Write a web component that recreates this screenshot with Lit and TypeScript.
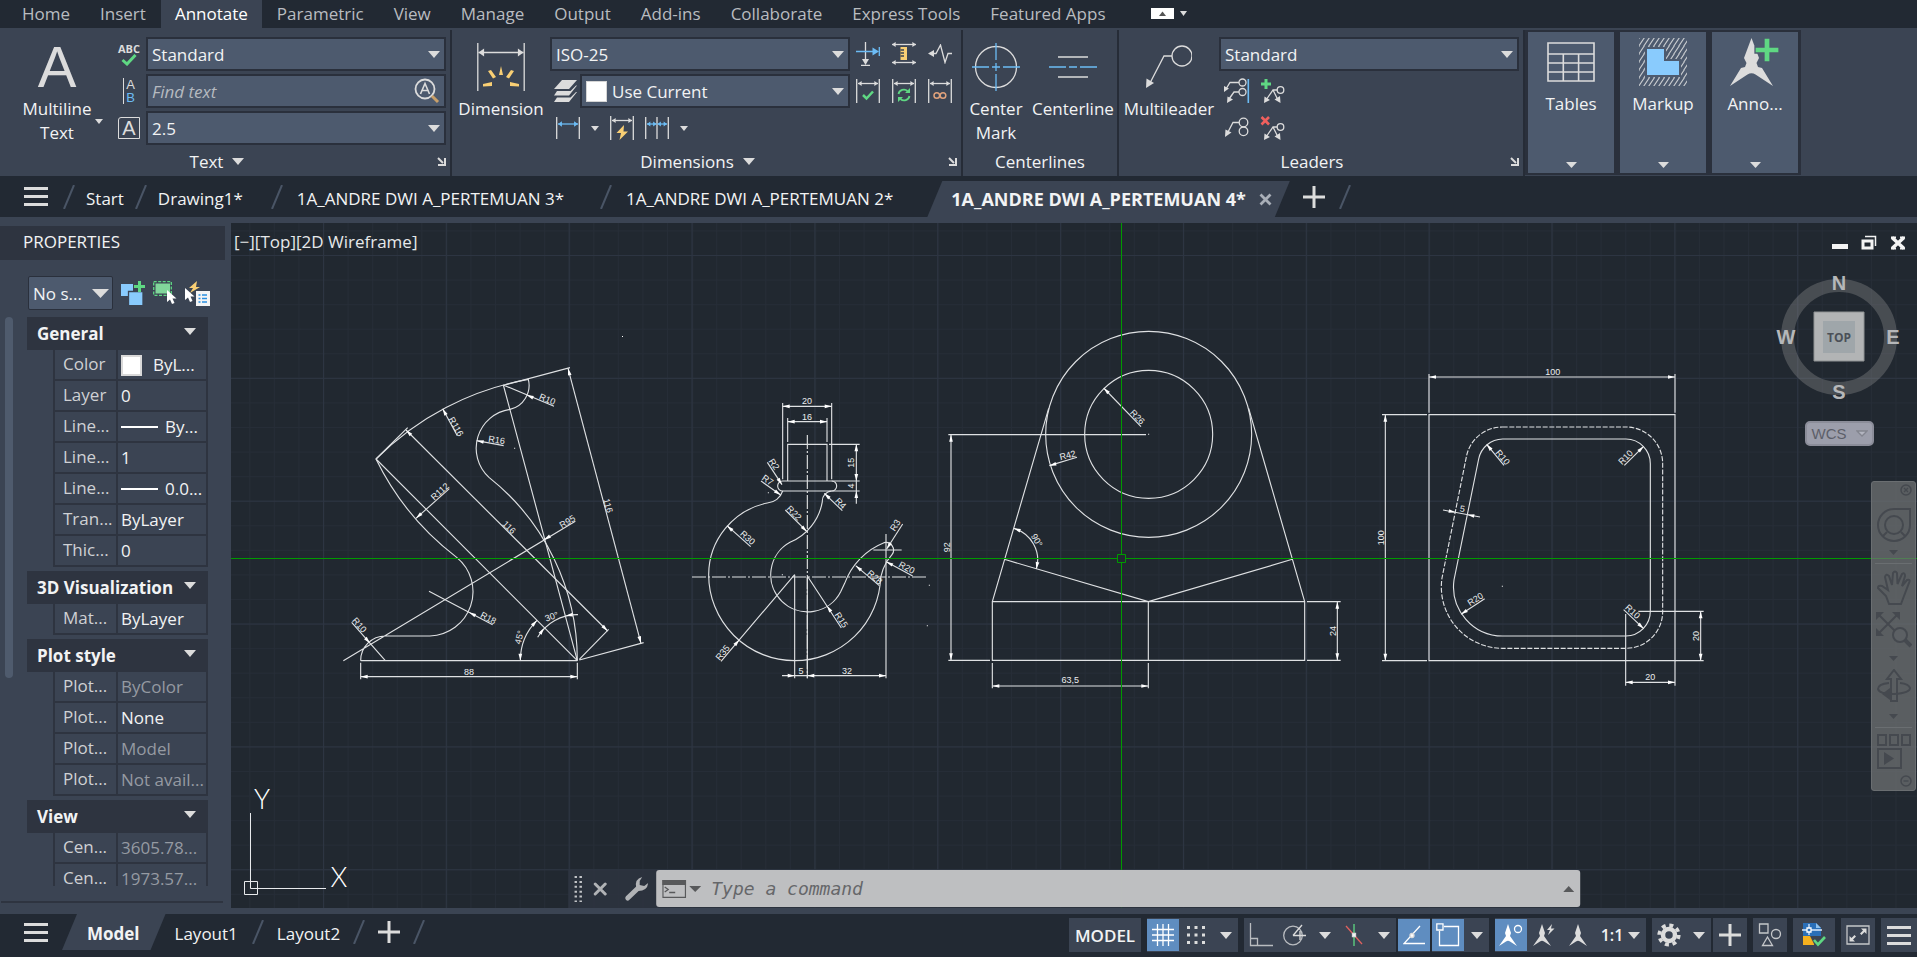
import { LitElement, html, svg, css, nothing } from "lit";
import { customElement } from "lit/decorators.js";

const base = css`
  :host { display: block; box-sizing: border-box; font-family: "Open Sans", "Noto Sans", sans-serif; font-size: 17px; color: #f2f3f4; }
  *, *::before, *::after { box-sizing: border-box; }
  button, select, input { font: inherit; color: inherit; background: none; border: 0; margin: 0; padding: 0; border-radius: 0; outline: none; }
  button { display: flex; align-items: center; justify-content: center; cursor: default; white-space: nowrap; }
  svg { display: block; flex: none; }
  a { color: inherit; text-decoration: none; }
  .combo { display: grid; grid-template-columns: minmax(0, 1fr); height: 34px; border: 2px solid #2a303c; background: #4d5a6e; }
  .combo > * { grid-area: 1 / 1; }
  .combo select, .combo input { appearance: none; width: 100%; height: 100%; padding: 0 28px 0 4px; }
  .combo > svg { justify-self: end; align-self: center; margin-right: 4px; pointer-events: none; }
`;

const LIGHT = "#dcdcdc";
const BLUE = "#6cbcf5";
const GREEN = "#5fd883";
const AMBER = "#f9cf74";

const ic = (w: number, h: number, body: unknown) =>
  html`<svg width=${w} height=${h} viewBox="0 0 ${w} ${h}" fill="none" stroke=${LIGHT} stroke-width="1.3" aria-hidden="true">${body}</svg>`;
const caret = (w = 12, h = 7, color = LIGHT) =>
  html`<svg width=${w} height=${h} viewBox="0 0 12 7" preserveAspectRatio="none" aria-hidden="true"><path d="M0 0H12L6 7Z" fill=${color} /></svg>`;
const menuIcon = () => ic(24, 19, svg`<path stroke="none" fill=${LIGHT} d="M0 0H24V3H0ZM0 8H24V11H0ZM0 16H24V19H0Z"/>`);
const plusIcon = () => ic(22, 22, svg`<path stroke="none" fill=${LIGHT} d="M9.500 0H12.500V9.500H22V12.500H12.500V22H9.500V12.500H0V9.500H9.500Z"/>`);
const slash = () => ic(12, 24, svg`<path d="M11 0L1 24" stroke="#4a5566" stroke-width="2"/>`);

const hArrow = (x1: number, x2: number, y: number, c: string, s = 4) =>
  svg`<path d="M${x1} ${y}H${x2}" stroke=${c}/><path stroke="none" fill=${c} d="M${x1} ${y}l${s * 1.4} ${-s}v${2 * s}ZM${x2} ${y}l${-s * 1.4} ${-s}v${2 * s}Z"/>`;
const dimFrame = (body: unknown) => ic(24, 24, svg`<path d="M.7 0V24M23.300 0V24"/>${hArrow(2, 22, 4.5, LIGHT, 2.6)}${body}`);

/* ---------- icons of the ribbon ---------- */
const icons = {
  abc: () => html`<span class="abc">ABC${ic(16, 12, svg`<path d="M1.500 6L6 10L14.500 1" stroke=${GREEN} stroke-width="3"/>`)}</span>`,
  align: () => html`<span class="ab"><span>A</span><span class="b">B</span></span>`,
  boxA: () => html`<span class="boxa">A</span>`,
  find: () => ic(26, 26, svg`<circle cx="11" cy="11" r="9.500" stroke-width="1.800"/><path d="M18 18L24 24" stroke="#c9a06a" stroke-width="3"/><path d="M6.500 16L11 5.500L15.500 16M8 12.500H14" stroke-width="1.600"/>`),
  dimension: () => ic(48, 48, svg`<path d="M.8 0V48M47.200 0V48"/>${hArrow(1.5, 46.5, 9.5, LIGHT, 4)}
    <path stroke="none" fill=${AMBER} d="M24 23l2 9h-4ZM11 28l3-1 5 7-3 1.500ZM37 28l-3-1-5 7 3 1.500ZM6 41l9-2v4l-9 .5ZM42 41l-9-2v4l9 .5Z"/>`),
  layers: () => ic(23, 22, svg`<path stroke="none" fill=${LIGHT} d="M8 0H23L15 9H0ZM3 11L16.500 11L22 5.500H23L15 15.500H0ZM3 17.500H16.500L22 12H23L15 22H0Z"/>`),
  linear: () => ic(24, 22, svg`<path d="M.7 0V22M23.300 0V22"/>${hArrow(2, 22, 7, BLUE, 2.8)}`),
  quick: () => dimFrame(svg`<path stroke="none" fill=${AMBER} d="M14 9L6.500 17H11L9.500 24L18 15.500H13.500Z"/>`),
  chain: () => ic(24, 22, svg`<path d="M.7 0V22M12 0V22M23.300 0V22"/>${hArrow(2, 11.5, 7, BLUE, 2.4)}${hArrow(12.5, 22, 7, BLUE, 2.4)}`),
  breakDim: () => ic(24, 24, svg`<path d="M9.500 0V18M5 23.500H14"/><path stroke="none" fill=${LIGHT} d="M9.500 23L6 17H13Z"/><path d="M0 9.500H18M23.300 5V14" stroke=${BLUE}/><path stroke="none" fill=${BLUE} d="M23 9.500L16.500 5.500V13.500Z"/>`),
  adjust: () => ic(24, 24, svg`${hArrow(0, 24, 2.5, LIGHT, 2.6)}${hArrow(0, 24, 20.5, LIGHT, 2.6)}<path stroke="none" fill=${AMBER} d="M8.500 5H15V18H8.500Z"/><path d="M8.500 8H12M8.500 11H12M8.500 14H12" stroke="#3b4453"/>`),
  jog: () => ic(24, 20, svg`<path d="M4 9.500H8L12.500 1L17 18.500L20 9.500H24"/><path stroke="none" fill=${LIGHT} d="M0 9.500L6 6V13Z"/>`),
  inspect: () => dimFrame(svg`<path d="M7 16L10.500 19.500L17 12.500" stroke=${GREEN} stroke-width="2.500"/>`),
  update: () => dimFrame(svg`<path d="M6.500 15a5.500 5.500 0 0 1 9-3M17.500 17a5.500 5.500 0 0 1-9 3" stroke=${GREEN} stroke-width="1.800"/><path stroke="none" fill=${GREEN} d="M18 9V14H13ZM6 23V18H11Z"/>`),
  assoc: () => dimFrame(svg`<circle cx="8.800" cy="16.500" r="2.800" stroke="#e0a27c" stroke-width="1.500"/><circle cx="15" cy="16.500" r="2.800" stroke="#e0a27c" stroke-width="1.500"/>`),
  centerMark: () => ic(48, 48, svg`<circle cx="24" cy="24" r="20.500"/><path d="M24 0V17M24 20V28M24 31V48M0 24H17M20 24H28M31 24H48" stroke=${BLUE}/>`),
  centerLine: () => ic(48, 24, svg`<path d="M9 2H39M9 22H39"/><path d="M0 12H17M20 12H28M31 12H48" stroke=${BLUE}/>`),
  multileader: () => ic(46, 44, svg`<circle cx="36" cy="11" r="10"/><path d="M26 11H18L4 38"/><path stroke="none" fill=${LIGHT} d="M0 43L.5 33.500L8 38Z"/>`),
  leaderAlign: () => ic(26, 26, svg`<circle cx="18.500" cy="4.500" r="3.500"/><circle cx="18.500" cy="14" r="3.500"/><path d="M15 4.500H6L2 11M15 14H10L5 21"/><path stroke="none" fill=${LIGHT} d="M0 14V8L5 10.500ZM3 25L3.500 18.500L9 21.500Z"/><path d="M24.300 1V25" stroke=${BLUE} stroke-width="1.600"/>`),
  leaderAdd: () => ic(26, 26, svg`<path stroke="none" fill=${GREEN} d="M4.500 1H7.500V4.500H11V7.500H7.500V11H4.500V7.500H1V4.500H4.500Z"/><circle cx="20.500" cy="12" r="3.300"/><path d="M17 12H13L6 22M13 12L18 22"/><path stroke="none" fill=${LIGHT} d="M4 25L4.500 18.500L10 22ZM20.500 25L20 18L14.500 21.500Z"/>`),
  leaderCollect: () => ic(26, 24, svg`<circle cx="19.500" cy="6.500" r="4.300"/><circle cx="19.500" cy="15.300" r="4.300"/><path d="M15 6.500H9L4 16"/><path stroke="none" fill=${LIGHT} d="M1 21L1.500 13.500L7.500 16.500Z"/>`),
  leaderRemove: () => ic(26, 26, svg`<path d="M1.500 2L9 9.500M9 2L1.500 9.500" stroke="#f0605e" stroke-width="2.600"/><circle cx="20.500" cy="12" r="3.300"/><path d="M17 12H13L6 22M13 12L18 22"/><path stroke="none" fill=${LIGHT} d="M4 25L4.500 18.500L10 22ZM20.500 25L20 18L14.500 21.500Z"/>`),
  tables: () => ic(48, 48, svg`<path d="M1 5H47V43H1ZM1 16H47M1 25H47M1 34H47M16.300 16V43M31.600 16V43" stroke-width="1.600"/>`),
  markup: () => ic(48, 48, svg`<defs><pattern id="h" width="5" height="8" patternUnits="userSpaceOnUse"><path d="M-.5 8.500L5.500 -.5M-5.500 8.500L.5 -.5M4.500 8.500L10.500 -.5" stroke="#c9ccd0" stroke-width="1.100"/></pattern></defs><path d="M0 0H48V48H0Z" fill="url(#h)" stroke="none"/><path d="M7 10H26V22H41V38H7Z" fill="#89cbfd" stroke="#4d5a6e" stroke-width="2"/>`),
  anno: () => ic(50, 48, svg`<path stroke="none" fill=${LIGHT} d="M21.500 0L29 20L26.500 25L28 29L32 30L43 48L25.500 36.500Q21.500 34 17.500 36.500L0 48L11 30L15 29L16.500 25L14 20Z"/><path stroke="#4d5a6e" fill=${GREEN} d="M34 0H40V9H49V15H40V24H34V15H25V9H34Z"/>`),
  launcher: () => ic(9, 9, svg`<path d="M1 1L6 6" stroke-width="2"/><path d="M8 1V8H1" stroke-width="2"/>`),
};

@customElement("ribbon-bar")
class RibbonBar extends LitElement {
  static styles = [base, css`
    .tabs { display: flex; height: 28px; padding-left: 7px; background: #222933; color: #b9bcc0; align-items: stretch; }
    .tab { padding: 0 15px; line-height: 24px; }
    .tab.on { background: #3b4453; color: #fff; padding: 0 14px; }
    .mini { margin: 4px 0 0 30px; gap: 6px; height: 18px; }
    .ribbon { display: flex; height: 148px; padding-left: 2px; background: #3b4453; }
    .panel { display: flex; flex-direction: column; border-right: 2px solid #262c37; margin-top: 2px; padding-top: 7px; }
    .body { display: flex; flex: 1; }
    .title { display: flex; height: 30px; align-items: center; }
    .title .name { flex: 1; gap: 9px; height: 26px; }
    .launch { width: 18px; height: 18px; }
    .big { flex-direction: column; justify-content: flex-start; align-self: flex-start; line-height: 24px; }
    .big .pic { display: flex; align-items: center; justify-content: center; height: 60px; }
    .big .lab { display: grid; grid-template-columns: 1fr auto 1fr; align-items: center; width: 100%; white-space: pre-line; }
    .big .lab b { font-weight: 400; grid-column: 2; }
    .big .lab svg { margin-left: 4px; }
    .w110 { width: 110px; } .w98 { width: 98px; } .w66 { width: 66px; } .w88 { width: 88px; } .w100 { width: 100px; }
    .pic .a { font: 58px/60px "Liberation Sans", sans-serif; color: #dcdcdc; }
    .side { display: grid; grid-template-rows: repeat(3, 34px); gap: 3px; width: 34px; }
    .stack { display: grid; grid-template-rows: repeat(3, 34px); gap: 3px; width: 300px; }
    .find input { font-style: italic; }
    .find input::placeholder { color: #b6bac0; opacity: 1; }
    .use { display: grid; grid-template-columns: 30px 1fr; }
    .use select { padding-left: 30px; }
    .swatch { width: 21px; height: 21px; background: #fff; border: 1px solid #d5d5d5; margin-left: 4px; align-self: center; pointer-events: none; }
    .row { display: flex; align-items: center; gap: 11px; padding-left: 6px; }
    .dims { display: grid; grid-template: 34px 34px / repeat(3, 36px); gap: 3px 0; }
    .end3 { padding-right: 3px; } .end4 { padding-right: 4px; }
    .pairs { display: grid; grid-template: 34px 34px / 24px 24px; gap: 3px 12px; padding-left: 6px; justify-content: start; }
    .abc { font-size: 11px; font-weight: 700; line-height: 11px; color: #dcdcdc; display: flex; flex-direction: column; align-items: center; }
    .ab { display: flex; flex-direction: column; border-left: 1px solid #dcdcdc; padding-left: 2px; font: 13px/13px "Liberation Sans", sans-serif; color: #dcdcdc; }
    .ab .b { color: #6cbcf5; }
    .boxa { width: 22px; height: 22px; border: 1px solid #dcdcdc; border-top-left-radius: 3px; font: 20px/20px "Liberation Sans", sans-serif; color: #dcdcdc; }
    .fold { flex-direction: column; width: 92px; margin: 2px 0 1px; border: solid #2a303c; border-width: 2px 3px; background: #4d5a6e; justify-content: flex-start; padding: 6px 0 5px; }
    .fold .txt { line-height: 24px; margin-top: 6px; flex: 1; }
  `];
  render() {
    const tabs = ["Home", "Insert", "Annotate", "Parametric", "View", "Manage", "Output", "Add-ins", "Collaborate", "Express Tools", "Featured Apps"];
    const combo = (name: string, value: string, extra: unknown = nothing) => html`
      <div class="combo"><select aria-label=${name}><option>${value}</option></select>${extra}${caret()}</div>`;
    const btn = (name: string, body: unknown) => html`<button aria-label=${name}>${body}</button>`;
    const title = (name: string, more: boolean, launch: boolean) => html`
      <div class="title"><button class="name">${name}${more ? caret() : nothing}</button>
      ${launch ? html`<button class="launch" aria-label="${name} settings">${icons.launcher()}</button>` : nothing}</div>`;
    const fold = (name: string, body: unknown) => html`<button class="fold">${body}<span class="txt">${name}</span>${caret(11, 6)}</button>`;
    return html`
      <nav class="tabs">
        ${tabs.map((t) => html`<button class="tab ${t === "Annotate" ? "on" : ""}">${t}</button>`)}
        <button class="mini" aria-label="Minimize ribbon">
          ${ic(23, 11, svg`<path stroke="none" fill="#fff" d="M0 0H23V11H0Z"/><path stroke="none" fill="#555" d="M8 8L11.500 3.500L15 8Z"/>`)}${caret(7, 5)}
        </button>
      </nav>
      <div class="ribbon">
        <section class="panel">
          <div class="body end4">
            <button class="big w110"><span class="pic"><span class="a">A</span></span><span class="lab"><b>Multiline
Text</b>${caret(8, 5)}</span></button>
            <div class="side">${btn("Check spelling", icons.abc())}${btn("Align text", icons.align())}${btn("Text height", icons.boxA())}</div>
            <div class="stack">
              ${combo("Text style", "Standard")}
              <div class="combo find"><input aria-label="Find text" placeholder="Find text" />${icons.find()}</div>
              ${combo("Text height", "2.5")}
            </div>
          </div>
          ${title("Text", true, true)}
        </section>
        <section class="panel">
          <div class="body end3">
            <button class="big w98"><span class="pic">${icons.dimension()}</span><span class="lab"><b>Dimension</b></span></button>
            <div class="stack">
              ${combo("Dimension style", "ISO-25")}
              <div class="use">${btn("Dimension layer", icons.layers())}${combo("Layer", "Use Current", html`<span class="swatch"></span>`)}</div>
              <div class="row">
                ${btn("Linear", icons.linear())}${btn("More linear", caret(8, 5))}${btn("Quick dimension", icons.quick())}${btn("Continue", icons.chain())}${btn("More continue", caret(8, 5))}
              </div>
            </div>
            <div class="dims">
              ${btn("Break", icons.breakDim())}${btn("Adjust space", icons.adjust())}${btn("Jog line", icons.jog())}
              ${btn("Inspect", icons.inspect())}${btn("Update", icons.update())}${btn("Reassociate", icons.assoc())}
            </div>
          </div>
          ${title("Dimensions", true, true)}
        </section>
        <section class="panel">
          <div class="body">
            <button class="big w66"><span class="pic">${icons.centerMark()}</span><span class="lab"><b>Center
Mark</b></span></button>
            <button class="big w88"><span class="pic">${icons.centerLine()}</span><span class="lab"><b>Centerline</b></span></button>
          </div>
          ${title("Centerlines", false, false)}
        </section>
        <section class="panel">
          <div class="body end4">
            <button class="big w100"><span class="pic">${icons.multileader()}</span><span class="lab"><b>Multileader</b></span></button>
            <div class="stack">
              ${combo("Leader style", "Standard")}
              <div class="pairs">
                ${btn("Align leaders", icons.leaderAlign())}${btn("Add leader", icons.leaderAdd())}
                ${btn("Collect leaders", icons.leaderCollect())}${btn("Remove leader", icons.leaderRemove())}
              </div>
            </div>
          </div>
          ${title("Leaders", false, true)}
        </section>
        ${fold("Tables", icons.tables())}${fold("Markup", icons.markup())}${fold("Anno...", icons.anno())}
      </div>`;
  }
}

@customElement("file-tabs")
class FileTabs extends LitElement {
  static styles = [base, css`
    :host { background: #222933; }
    nav { display: flex; align-items: center; height: 41px; padding-left: 24px; }
    .menu { margin-right: 15px; }
    .tab { padding: 4px 36px 0 14px; height: 40px; }
    .tab.short { padding: 4px 11px 0; }
    .tab.mid { padding: 4px 28px 0 11px; }
    .active { display: flex; align-items: center; gap: 13px; align-self: flex-end; height: 36px; padding: 0 18px 0 24px; margin-right: 13px; margin-left: -2px; background: #3b4453; font-size: 18px; font-weight: 700; clip-path: polygon(15px 0, 100% 0, calc(100% - 15px) 100%, 0 100%); }
    .add { margin-right: 14px; }
  `];
  render() {
    return html`<nav>
      <button class="menu" aria-label="File menu">${menuIcon()}</button>
      ${slash()}<button class="tab short">Start</button>
      ${slash()}<button class="tab mid">Drawing1*</button>
      ${slash()}<button class="tab">1A_ANDRE DWI A_PERTEMUAN 3*</button>
      ${slash()}<button class="tab">1A_ANDRE DWI A_PERTEMUAN 2*</button>
      <div class="active"><span>1A_ANDRE DWI A_PERTEMUAN 4*</span>
        <button aria-label="Close drawing">${ic(13, 13, svg`<path d="M1.500 1.500L11.500 11.500M11.500 1.500L1.500 11.500" stroke="#a9afb8" stroke-width="2.800"/>`)}</button></div>
      <button class="add" aria-label="New drawing">${plusIcon()}</button>${slash()}
    </nav>`;
  }
}

type Row = { k: string; v: string; dim?: boolean; mark?: "swatch" | "line" };
const groups: { name: string; rows: Row[] }[] = [
  { name: "General", rows: [
    { k: "Color", v: "ByL...", mark: "swatch" }, { k: "Layer", v: "0" }, { k: "Line...", v: "By...", mark: "line" },
    { k: "Line...", v: "1" }, { k: "Line...", v: "0.0...", mark: "line" }, { k: "Tran...", v: "ByLayer" }, { k: "Thic...", v: "0" } ] },
  { name: "3D Visualization", rows: [{ k: "Mat...", v: "ByLayer" }] },
  { name: "Plot style", rows: [
    { k: "Plot...", v: "ByColor", dim: true }, { k: "Plot...", v: "None" }, { k: "Plot...", v: "Model", dim: true }, { k: "Plot...", v: "Not avail...", dim: true } ] },
  { name: "View", rows: [{ k: "Cen...", v: "3605.78...", dim: true }, { k: "Cen...", v: "1973.57...", dim: true }] },
];

@customElement("properties-panel")
class PropertiesPanel extends LitElement {
  static styles = [base, css`
    :host { display: flex; flex-direction: column; width: 231px; background: #3b4453; padding-top: 3px; min-height: 0; }
    h2 { margin: 0 6px 0 0; padding-left: 23px; height: 34px; line-height: 31px; font-size: 17px; font-weight: 400; background: #2e3440; }
    .pick { display: flex; align-items: center; margin: 16px 0 7px 28px; gap: 8px; }
    .combo { width: 85px; border-width: 1px; border-radius: 2px; }
    .combo select { padding: 0 30px 0 4px; }
    .combo > svg { margin-right: 3px; }
    .list { display: flex; flex: 1; min-height: 0; margin-bottom: 15px; padding-left: 5px; gap: 14px; }
    .bar { width: 8px; height: 361px; border-radius: 4px; background: #4f5b6d; }
    .groups { width: 181px; overflow: hidden; }
    .head { width: 100%; height: 33px; padding: 0 12px 0 10px; justify-content: space-between; font-weight: 700; background: #2e3440; }
    .head svg { margin-bottom: 4px; }
    table { width: 155px; margin: 0 0 4px 26px; border-collapse: separate; border-spacing: 0; table-layout: fixed; background: #2e3440; }
    tr { height: 31px; }
    th, td { padding: 0; font-weight: 400; text-align: left; line-height: 28px; height: 31px; border: solid #2e3440; border-width: 0 2px 2px; background: #3b4453; white-space: nowrap; overflow: hidden; vertical-align: top; }
    th { width: 64px; color: #cfd1d4; padding-left: 8px; border-right-width: 1px; }
    td { padding: 1px 0 0 3px; border-left-width: 1px; }
    td .cell { display: flex; align-items: center; gap: 7px; }
    .dim { color: #959aa2; }
    .sw { width: 21px; height: 21px; background: #fff; border: 2px solid #d9d9d9; margin-right: 4px; }
    .ln { width: 37px; height: 2px; background: #fff; }
    .foot { height: 2px; margin: 0 8px 5px 1px; background: #2e3440; }
  `];
  render() {
    const cursor = (x: number, y: number) => svg`<path stroke="none" fill="#fff" d="M${x} ${y}v12l3-2.500l2 4.500l2.500-1l-2-4.500h4Z"/>`;
    return html`
      <h2>PROPERTIES</h2>
      <div class="pick">
        <div class="combo"><select aria-label="Selection"><option>No s...</option></select>${caret(17, 9)}</div>
        <button aria-label="Toggle pick add">${ic(24, 24, svg`<path stroke="none" fill="#89cbfd" d="M0 3H12V15H0Z"/><path stroke="#3b4453" fill="#89cbfd" d="M7.500 10.500H22V25H7.500Z"/><path stroke="none" fill=${GREEN} d="M17 0H20V4H24V7H20V11H17V7H13V4H17Z"/>`)}</button>
        <button aria-label="Select objects">${ic(24, 24, svg`<path stroke=${GREEN} stroke-dasharray="3 1.500" d="M.7 .7H18.300V14.300H.7Z"/><path stroke="none" fill="#81d69b" d="M2.500 2.500H17V12.500H2.500Z"/>${cursor(14, 9)}`)}</button>
        <button aria-label="Quick select">${ic(25, 25, svg`<path stroke="none" fill=${AMBER} d="M12 0L4 7H8L5 12L15 6H11Z"/>${cursor(0, 7)}<path stroke="none" fill="#f4f4f4" d="M11 10H25V25H11Z"/><path d="M13.500 14H15.500M17 14H22M13.500 17.500H15.500M17 17.500H22M13.500 21H15.500M17 21H22" stroke="#2a8fe0"/>`)}</button>
      </div>
      <div class="list">
        <div class="bar"></div>
        <div class="groups">
          ${groups.map((g) => html`
            <button class="head">${g.name}${caret(12, 7)}</button>
            <table aria-label=${g.name}><tbody>${g.rows.map((r) => html`
              <tr><th scope="row">${r.k}</th>
              <td class=${r.dim ? "dim" : ""}><div class="cell">${r.mark === "swatch" ? html`<span class="sw"></span>` : r.mark ? html`<span class="ln"></span>` : nothing}${r.v}</div></td></tr>`)}
            </tbody></table>`)}
        </div>
      </div>
      <div class="foot"></div>`;
  }
}

/* ---------- drafting helpers: three drawing units make one screen pixel ---------- */
const head = (x: number, y: number, deg: number) => svg`<path class="tip" transform="translate(${x} ${y}) rotate(${deg})" d="M0 0L-21 -5.500V5.500Z"/>`;
const angle = (x1: number, y1: number, x2: number, y2: number) => (Math.atan2(y2 - y1, x2 - x1) * 180) / Math.PI;
const label = (x: number, y: number, t: string, rot = 0) => svg`<text x="0" y="9" transform="translate(${x} ${y}) rotate(${rot})">${t}</text>`;
const dim = (x1: number, y1: number, x2: number, y2: number) =>
  svg`<path d="M${x1} ${y1}L${x2} ${y2}"/>${head(x1, y1, angle(x2, y2, x1, y1))}${head(x2, y2, angle(x1, y1, x2, y2))}`;
const leader = (x1: number, y1: number, x2: number, y2: number) => svg`<path d="M${x1} ${y1}L${x2} ${y2}"/>${head(x1, y1, angle(x2, y2, x1, y1))}`;
const dot = (x: number, y: number) => svg`<path class="tip" d="M${x - 1.5} ${y - 1.5}h3v3h-3Z"/>`;

const boot = svg`
  <path d="M62 962H712M10 962L706 544M62 962A74 74 0 0 1 136 888H270A133 133 0 0 0 350 652A827 827 0 0 1 108 357A857 857 0 0 1 565 118A74 74 0 0 1 510 208A118 118 0 0 0 447 412A702 702 0 0 1 712 962"/>
  <path d="M108 357L712 962M490 135L712 962M498 134L690 83M108 357L203 263M718 958L806 868M718 960L911 908M62 968V1018M712 968V1018"/>
  <path d="M541 962A171 171 0 0 1 591 841M593 892A138 138 0 0 1 714 824"/>
  ${dim(62, 1010, 712, 1010)}${dim(198, 270, 803, 873)}${dim(684, 85, 903, 910)}
  ${leader(308, 206, 352, 287)}${leader(228, 535, 328, 446)}${leader(410, 302, 491, 317)}
  <path d="M35 847L136 962M490 135L642 199M267 754L458 854"/>
  ${head(90, 910, 49)}${head(560, 165, 203)}${head(387, 817, 207)}${head(612, 599, 149)}
  ${head(541, 962, 90)}${head(591, 841, -48)}${head(612, 864, -56)}${head(677, 827, 172)}
  ${label(387, 996, "88")}${label(507, 562, "116", 45)}${label(804, 497, "116", 75)}${label(622, 178, "R10", 22)}
  ${label(470, 300, "R16", 8)}${label(348, 260, "R116", 61)}${label(300, 455, "R112", -42)}${label(682, 545, "R95", -31)}
  ${label(445, 834, "R18", 27)}${label(58, 855, "R10", 49)}${label(538, 892, "45°", -75)}${label(635, 830, "30°", -20)}${dot(524, 325)}`;

const hook = svg`
  <path stroke-dasharray="42 6 6 6" d="M382 165V895M36 591H741"/>
  <path d="M323 303V193H441V303M308 303H455A15 15 0 0 1 455 333H308A15 15 0 0 1 308 303"/>
  <path d="M308 333A52 52 0 0 1 262 369A221 221 0 0 0 86 584A258 258 0 0 0 344 842A258 258 0 0 0 602 592A148 148 0 0 1 620 545L636 524A23 23 0 0 0 612 488A207 207 0 0 0 494 610L482 635A111 111 0 1 1 330 487A162 162 0 0 0 427 365A30 30 0 0 1 455 333"/>
  <path d="M308 69V298M455 69V298M323 114V186M441 114V186M447 193H539M455 303H539M455 333H539M529 303V371M344 584V895M618 462V895M580 510H665M306 887H382M382 591V895"/>
  ${dim(308, 79, 455, 79)}${dim(323, 125, 441, 125)}${dim(529, 193, 529, 303)}${head(529, 333, -90)}${dim(382, 887, 618, 887)}${head(344, 887, 0)}
  ${leader(141, 437, 212, 500)}${leader(381, 455, 316, 390)}${leader(302, 345, 243, 303)}${leader(306, 314, 262, 247)}${leader(433, 340, 487, 392)}
  ${leader(620, 507, 668, 432)}${leader(619, 545, 698, 588)}${leader(527, 557, 598, 617)}
  <path d="M344 584L123 844M382 588L484 744"/>${head(178, 779, -50)}${head(441, 677, 237)}
  ${label(381, 63, "20")}${label(381, 110, "16")}${label(514, 248, "15", -90)}${label(514, 318, "4", -90)}${label(282, 253, "R2", 57)}${label(263, 300, "R7", 35)}
  ${label(482, 370, "R4", 45)}${label(342, 399, "R22", 45)}${label(203, 473, "R30", 42)}${label(646, 436, "R3", -58)}${label(680, 563, "R20", 28)}
  ${label(584, 592, "R28", 40)}${label(484, 720, "R15", 57)}${label(128, 818, "R35", -50)}${label(363, 872, "5")}${label(501, 872, "32")}
  ${dot(748, 616)}${dot(742, 737)}${dot(265, 338)}${dot(307, 584)}`;

const bracket = svg`
  <circle cx="656" cy="343" r="309"/><circle cx="656" cy="343" r="192"/>
  <path d="M187 845L356 265M1124 845L956 265M187 845H1124V1021H187ZM655 845V1021M223 718L655 845L1087 718M55 344H648M55 1021H180M187 1029V1105M655 1029V1105M1131 845H1232M1131 1021H1232"/>
  <path d="M251 625A98 98 0 0 1 319 747"/>${head(251, 625, 200)}${head(319, 747, 100)}
  ${dim(63, 344, 63, 1021)}${dim(187, 1098, 655, 1098)}${dim(1222, 845, 1222, 1021)}
  ${leader(521, 204, 633, 320)}${leader(358, 437, 441, 412)}
  ${label(622, 291, "R26", 45)}${label(413, 406, "R42", -15)}${label(320, 661, "90°", 60)}${label(50, 682, "92", -90)}${label(421, 1080, "63,5")}${label(1208, 933, "24", -90)}${dot(656, 343)}`;

const plate = svg`
  <path d="M207 194H945V932H207ZM428 267H798A74 74 0 0 1 871 341V784A74 74 0 0 1 798 858H428A148 148 0 0 1 282 690L356 327A74 74 0 0 1 428 267"/>
  <path stroke-dasharray="15 5" d="M428 231H798A110 110 0 0 1 908 341V784A110 110 0 0 1 798 895H428A184 184 0 0 1 246 684L320 316A110 110 0 0 1 428 231"/>
  <path d="M207 72V188M945 72V188M66 194H201M66 932H201M835 784H1031M945 932H1031M797 792V1007M945 932V1007M249 480L360 501"/>
  ${dim(207, 81, 945, 81)}${dim(76, 194, 76, 932)}${dim(1022, 784, 1022, 932)}${dim(797, 997, 945, 997)}${head(287, 487, 11)}${head(322, 494, 191)}
  ${leader(380, 283, 432, 346)}${leader(851, 289, 793, 346)}${leader(303, 793, 374, 746)}${leader(851, 836, 791, 779)}
  ${label(578, 66, "100")}${label(63, 563, "100", -90)}${label(428, 322, "R10", 50)}${label(797, 322, "R10", -45)}${label(346, 748, "R20", -33)}
  ${label(818, 785, "R10", 43)}${label(307, 477, "5", 8)}${label(1009, 858, "20", -90)}${label(871, 981, "20")}${dot(427, 709)}`;

@customElement("drawing-view")
class DrawingView extends LitElement {
  static styles = [base, css`
    :host { display: block; position: relative; flex: 1; min-width: 0; overflow: hidden; background: #212830; }
    .sheet { position: absolute; inset: 0; width: 100%; height: 100%; }
    .ink { fill: none; stroke: #dfe1e3; stroke-width: 3.4; }
    .tip { fill: #fff; stroke: none; }
    .ink text { fill: #eceeef; stroke: none; font: 27px "Liberation Sans Narrow", "Liberation Sans", sans-serif; text-anchor: middle; }
    .axis { font: 300 27px Lato, sans-serif; fill: #fff; text-anchor: middle; }
    .view { position: absolute; left: 3px; top: 6px; display: flex; line-height: 26px; color: #e6e8ea; }
    .win { position: absolute; right: 11px; top: 12px; display: flex; gap: 13px; }
    .compass { position: absolute; right: 15px; top: 50px; width: 126px; height: 136px; }
    .compass text { font: 700 20px "Liberation Sans", sans-serif; fill: #b5b7b9; text-anchor: middle; }
    .compass .top { font: 700 12px "Open Sans", sans-serif; fill: #4b5058; }
    .wcs { position: absolute; right: 43px; top: 198px; width: 69px; height: 25px; gap: 9px; border: 2px solid #8b8d99; border-radius: 5px; background: #9c9eab; color: #5c5e69; font: 15px "Liberation Sans", sans-serif; }
    .nav { position: absolute; right: 1px; top: 258px; width: 45px; height: 310px; display: flex; flex-direction: column; align-items: center; background: rgba(112, 115, 116, .72); border: 1px solid #6a6e71; border-radius: 3px; padding-top: 2px; }
    .nav .edge { align-self: flex-end; margin-right: 3px; }
    .g12 { margin-top: 12px; } .g8 { margin-top: 8px; } .g6 { margin-top: 6px; } .last { margin-top: auto; margin-bottom: 3px; }
    .rule { width: 37px; height: 1px; background: #6a6e71; margin: 8px 0 0; }
    .rule.low { margin: 8px 0 6px; }
    .cmd { position: absolute; left: 50%; bottom: 0; width: 60%; transform: translateX(-50%); display: flex; align-items: center; height: 38px; background: rgba(46, 52, 65, .8); padding-bottom: 1px; }
    .grip { margin-left: 6px; } .x { margin-left: 10px; } .wrench { margin: 0 8px 0 18px; }
    .line { flex: 1; display: flex; align-items: center; height: 37px; border-radius: 3px; background: rgba(203, 203, 204, .92); padding: 0 6px; color: #5b5c5e; gap: 3px; }
    .line input { flex: 1; min-width: 0; height: 30px; margin-left: 7px; font: italic 18px "DejaVu Sans Mono", monospace; }
    .line input::placeholder { color: #66676a; opacity: 1; }
  `];
  render() {
    const T = "#45494f";
    const nav = (name: string, cls: string, w: number, h: number, body: unknown) =>
      html`<button class=${cls} aria-label=${name}><svg width=${w} height=${h} viewBox="0 0 ${w} ${h}" fill="none" stroke=${T} stroke-width="2">${body}</svg></button>`;
    return html`
      <svg class="sheet" role="img" aria-label="Model space">
        <defs>
          <pattern id="minor" width="24.570" height="24.570" patternUnits="userSpaceOnUse" x="92" y="32"><path d="M.5 0V25M0 .5H25" stroke="#262d37" fill="none"/></pattern>
          <pattern id="major" width="122.850" height="122.850" patternUnits="userSpaceOnUse" x="92" y="32"><path d="M.5 0V123M0 .5H123" stroke="#2d3542" stroke-width="1.200" fill="none"/></pattern>
        </defs>
        <rect width="100%" height="100%" fill="url(#minor)"/><rect width="100%" height="100%" fill="url(#major)"/>
        <g transform="translate(-231 -223)">
          <g class="ink" transform="translate(340 340) scale(.33333)">${boot}</g>
          <g class="ink" transform="translate(680 380) scale(.33333)">${hook}</g>
          <g class="ink" transform="translate(930 320) scale(.33333)">${bracket}</g>
          <g class="ink" transform="translate(1360 350) scale(.33333)">${plate}</g>
          <path d="M250.500 813V888.500H326M244.500 881.500H257.500V894.500H244.500Z" fill="none" stroke="#e8eaec"/>
          <text class="axis" x="262" y="809">Y</text><text class="axis" x="339" y="887">X</text>
          <path d="M622 336h1v1h-1Z" fill="#fff"/>
          <path d="M0 558.500H1117.500M1125.500 558.500H4000M1121.500 0V554.500M1121.500 562.500V3000M1117.500 554.500H1125.500V562.500H1117.500Z" fill="none" stroke="#009a00"/>
        </g>
      </svg>
      <div class="view"><button>[−]</button><button>[Top]</button><button>[2D Wireframe]</button></div>
      <div class="win">
        <button aria-label="Minimize">${ic(16, 16, svg`<path stroke="none" fill="#f4f4f4" d="M0 9H16V14H0Z"/>`)}</button>
        <button aria-label="Restore">${ic(16, 16, svg`<path d="M4 1.500H14.500V11" stroke="#f4f4f4" stroke-width="1.500"/><path d="M2 6H11V13H2Z" stroke="#f4f4f4" stroke-width="3"/>`)}</button>
        <button aria-label="Close">${ic(16, 16, svg`<path d="M2 2.500L14 13.500M14 2.500L2 13.500" stroke="#f4f4f4" stroke-width="3.500"/><path d="M1 2.500H6M10 2.500H15M1 13.500H6M10 13.500H15" stroke="#f4f4f4" stroke-width="2"/>`)}</button>
      </div>
      <svg class="compass" viewBox="0 0 126 136" role="img" aria-label="View cube">
        <circle cx="63" cy="64" r="51.500" fill="none" stroke="#9a9a9c" stroke-opacity=".32" stroke-width="13"/>
        <path d="M38 39H88V88H38Z" fill="#b2b4b5" stroke="#8f9293"/><path d="M47 48H79V80H47Z" fill="#9fa6aa"/>
        <text x="63" y="17">N</text><text x="63" y="126">S</text><text x="10" y="71">W</text><text x="117" y="71">E</text><text class="top" x="63" y="69">TOP</text>
      </svg>
      <button class="wcs">WCS${ic(12, 7, svg`<path d="M1 1H11L6 6Z" fill="#b3b5c0" stroke="#83858f"/>`)}</button>
      <div class="nav">
        ${nav("Close navigation bar", "edge", 12, 12, svg`<circle cx="6" cy="6" r="5" stroke-width="1.500"/><path d="M4 4L8 8M8 4L4 8" stroke-width="1.300"/>`)}
        ${nav("Steering wheel", "g12", 34, 34, svg`<path d="M17 1H33V17A16 16 0 1 1 17 1Z"/><circle cx="17" cy="17" r="9"/><path d="M10 24L6 28M24 24L28 28"/>`)}
        ${nav("More wheels", "g8", 9, 5, svg`<path d="M0 0H9L4.500 5Z" fill=${T} stroke="none"/>`)}
        <div class="rule"></div>
        ${nav("Pan", "g6", 34, 36, svg`<path d="M12 34L9 26L1 18Q1 15 5 16L11 20L8 7Q9 3 12 6L15 15L16 3Q18 0 20 3L20.500 14L25 4Q28 2 28 6L25 16L30 10Q34 9 32 13L27 26L24 34Z"/>`)}
        ${nav("Zoom", "g6", 36, 36, svg`<path d="M2 2L22 22M22 2L2 22"/><path d="M0 0H8L0 8ZM24 0H16L24 8ZM0 24H8L0 16Z" fill=${T} stroke="none"/><circle cx="24" cy="23" r="7" fill="#5c6064"/><path d="M29 28L35 34" stroke-width="4"/>`)}
        ${nav("More zoom", "g8", 9, 5, svg`<path d="M0 0H9L4.500 5Z" fill=${T} stroke="none"/>`)}
        ${nav("Orbit", "g8", 34, 33, svg`<path d="M14 32V10H10L17 1L24 10H20V32Z"/><path d="M12 14Q1 15 1 20Q2 25 17 25Q33 24 33 19Q32 15 23 14"/><path d="M5 25L13 19V31Z" fill=${T} stroke="none"/>`)}
        ${nav("More orbit", "g12", 9, 5, svg`<path d="M0 0H9L4.500 5Z" fill=${T} stroke="none"/>`)}
        <div class="rule low"></div>
        ${nav("Show motion", "", 34, 35, svg`<path d="M1 1H9V11H1ZM13 1H21V11H13ZM25 1H33V11H25ZM1 15H24V34H1Z"/><path d="M7 18L17 24.500L7 31Z" fill=${T} stroke="none"/>`)}
        ${nav("Customize", "edge last", 12, 12, svg`<circle cx="6" cy="6" r="5" stroke-width="1.500"/><path d="M3.500 6H8.500" stroke-width="1.300"/>`)}
      </div>
      <div class="cmd">
        <span class="grip">${ic(9, 27, svg`<path d="M1.500 1V27M6.500 1V27" stroke="#c3c5c8" stroke-width="2.500" stroke-dasharray="2 2.900"/>`)}</span>
        <button class="x" aria-label="Close command line">${ic(14, 14, svg`<path d="M2 2L12 12M12 2L2 12" stroke="#b0b2b5" stroke-width="3" stroke-linecap="round"/>`)}</button>
        <button class="wrench" aria-label="Customize">${ic(23, 24, svg`<path d="M2.500 21L13 11" stroke="#b0b2b5" stroke-width="5" stroke-linecap="round"/><path stroke="none" fill="#b0b2b5" d="M17 0Q9 2 11 11L13 14Q22 14 23 6L19 9L14.500 8V4Z"/>`)}</button>
        <div class="line">
          ${ic(24, 18, svg`<path stroke="#58595b" d="M.7 .7H23.300V17.300H.7Z"/><path fill="#58595b" stroke="none" d="M0 0H24V5H0Z"/><path stroke="#58595b" d="M2.500 7L6 9.500L2.500 12M7 12.500H13"/>`)}
          ${caret(12, 6, "#58595b")}
          <input aria-label="Command" placeholder="Type a command" />
          <button aria-label="Command history">${ic(11, 6, svg`<path stroke="none" fill="#58595b" d="M0 6H11L5.500 0Z"/>`)}</button>
        </div>
      </div>`;
  }
}

const person = (c: string) => svg`<path stroke="none" fill=${c} d="M9 0L12 9L11 12L18 22L11 17.500Q9 16 7 17.500L0 22L7 12L6 9Z"/>`;

@customElement("status-bar")
class StatusBar extends LitElement {
  static styles = [base, css`
    :host { display: flex; height: 43px; background: #222933; justify-content: space-between; align-items: flex-start; }
    .layouts { display: flex; align-items: center; height: 36px; padding-left: 24px; }
    .model { height: 36px; margin-left: 14px; padding: 3px 26px 0 25px; font-weight: 700; background: #3b4453; clip-path: polygon(15px 0, 100% 0, calc(100% - 15px) 100%, 0 100%); }
    .tab { padding: 3px 13px 0; height: 36px; }
    .tab.first { padding-left: 9px; padding-right: 14px; }
    .add { margin: 0 13px; }
    .tools { display: flex; gap: 6px; padding-top: 4px; }
    .group { display: flex; height: 34px; background: #3b4453; align-items: center; }
    .group button { height: 32px; width: 34px; }
    .group .drop { width: 25px; }
    .group .on { width: 32px; background: #5f8dc0; }
    .group .text { width: 72px; font-weight: 600; }
    .group .scale { width: 51px; gap: 5px; font-size: 16px; font-weight: 600; }
    .group .wide { width: 42px; }
    .group .last { width: 36px; }
    .gap { width: 2px; height: 34px; background: #222933; }
  `];
  render() {
    const b = (name: string, cls: string, body: unknown) => html`<button class=${cls} aria-label=${name}>${body}</button>`;
    const drop = (n: string) => b(n, "drop", caret());
    return html`
      <nav class="layouts">
        <button aria-label="Layout menu">${menuIcon()}</button>
        <button class="model">Model</button>
        <button class="tab first">Layout1</button>${slash()}
        <button class="tab">Layout2</button>${slash()}
        <button class="add" aria-label="New layout">${plusIcon()}</button>${slash()}
      </nav>
      <div class="tools">
        <div class="group"><button class="text">MODEL</button></div>
        <div class="group">
          ${b("Grid", "on", ic(22, 22, svg`<path stroke="#fff" d="M5.500 0V22M11 0V22M16.500 0V22M0 5.500H22M0 11H22M0 16.500H22"/>`))}
          ${b("Snap", "", ic(18, 18, svg`<path stroke-width="3" stroke-dasharray="3 4.500" d="M0 1.500H18M0 9H18M0 16.500H18"/>`))}${drop("Snap options")}
        </div>
        <div class="group">
          ${b("Ortho", "", ic(24, 24, svg`<path d="M1.500 0V22.500H24M1.500 15.500H8.500V22.500" stroke="#b9bcc0"/>`))}
          ${b("Polar", "", ic(24, 22, svg`<circle cx="10" cy="11.500" r="9.300" stroke="#b9bcc0"/><path d="M10 11.500H23M10 11.500L19 1M17 7V16"/>`))}${drop("Polar options")}
          ${b("Isometric", "", ic(20, 22, svg`<path d="M2 2L18 20" stroke="#e0615f"/><path d="M10 0V22" stroke=${GREEN}/><path d="M8.500 9.500h3v3h-3Z" fill="#fff"/>`))}${drop("Isometric options")}
          <span class="gap"></span>
          ${b("Tracking", "on", ic(22, 22, svg`<path d="M17 2L1 19.500H22" stroke="#fff"/><circle cx="9" cy="11.500" r="2" fill="#fff"/>`))}
          <span class="gap"></span>
          ${b("Object snap", "on", ic(24, 24, svg`<path d="M8 3.500H22.500V22.500H3.500V8M.8 .8H7V7H.8Z" stroke="#fff"/>`))}${drop("Object snap options")}
        </div>
        <div class="group">
          ${b("Annotation visibility", "on", ic(24, 22, svg`${person("#fff")}<circle cx="19" cy="5" r="3.500" stroke="#fff"/>`))}
          ${b("Auto scale", "", ic(22, 22, svg`${person(LIGHT)}<path stroke="none" fill=${LIGHT} d="M19 0L14 6H17L15 11L21.500 4.500H18Z"/>`))}
          ${b("Annotation scale", "", ic(18, 22, person(LIGHT)))}
          <button class="scale">1:1${caret()}</button>
        </div>
        <div class="group">
          ${b("Workspace", "", ic(24, 24, svg`<circle cx="12" cy="12" r="6" stroke-width="4.500"/><circle cx="12" cy="12" r="9.800" stroke-width="3.600" stroke-dasharray="4 3.700"/>`))}${drop("Workspace options")}
          <span class="gap"></span>${b("Monitor", "", plusIcon())}
        </div>
        <div class="group">${b("Isolate", "", ic(24, 24, svg`<path d="M1.500 1H10V10H1.500ZM9.500 14L14.500 22.500H4.500Z" stroke="#c5c7ca"/><circle cx="18" cy="11" r="4.500" stroke="#c5c7ca"/>`))}</div>
        <div class="group">${b("Drawing status", "wide", ic(24, 24, svg`<path stroke="none" fill="#2a6fb8" d="M1 0H14L19 5V13H1Z"/><path stroke="none" fill="#8fc2ee" d="M14 0V5H19Z"/><path stroke="none" fill="#f5b01e" d="M1 13H8L12 21V22H1Z"/><path d="M0 7H20M7 1V12" stroke="#dceafa"/><path d="M5 5h4v4h-4Z" fill="#2a6fb8" stroke="#fff"/><path d="M12 17L16 21.500L23 14" stroke=${GREEN} stroke-width="2.600"/>`))}</div>
        <div class="group">${b("Full screen", "", ic(24, 20, svg`<path d="M1 1H23V19H1Z" stroke="#c5c7ca"/><path stroke="none" fill=${LIGHT} d="M20.500 3.500V9L18.500 7L15.500 10L14 8.500L17 5.500L15 3.500ZM3.500 16.500V11L5.500 13L8.500 10L10 11.500L7 14.500L9 16.500Z"/>`))}</div>
        <div class="group">${b("Customization", "last", menuIcon())}</div>
      </div>`;
  }
}

@customElement("app-root")
class AppRoot extends LitElement {
  static styles = [base, css`
    :host { display: flex; flex-direction: column; height: 100vh; min-height: 600px; overflow: hidden; background: #3b4453; }
    ribbon-bar, file-tabs, status-bar { flex: none; }
    main { display: flex; flex: 1; min-height: 0; padding: 6px 0; }
    properties-panel { flex: none; }
  `];
  render() {
    return html`<ribbon-bar></ribbon-bar><file-tabs></file-tabs>
      <main><properties-panel></properties-panel><drawing-view></drawing-view></main>
      <status-bar></status-bar>`;
  }
}
